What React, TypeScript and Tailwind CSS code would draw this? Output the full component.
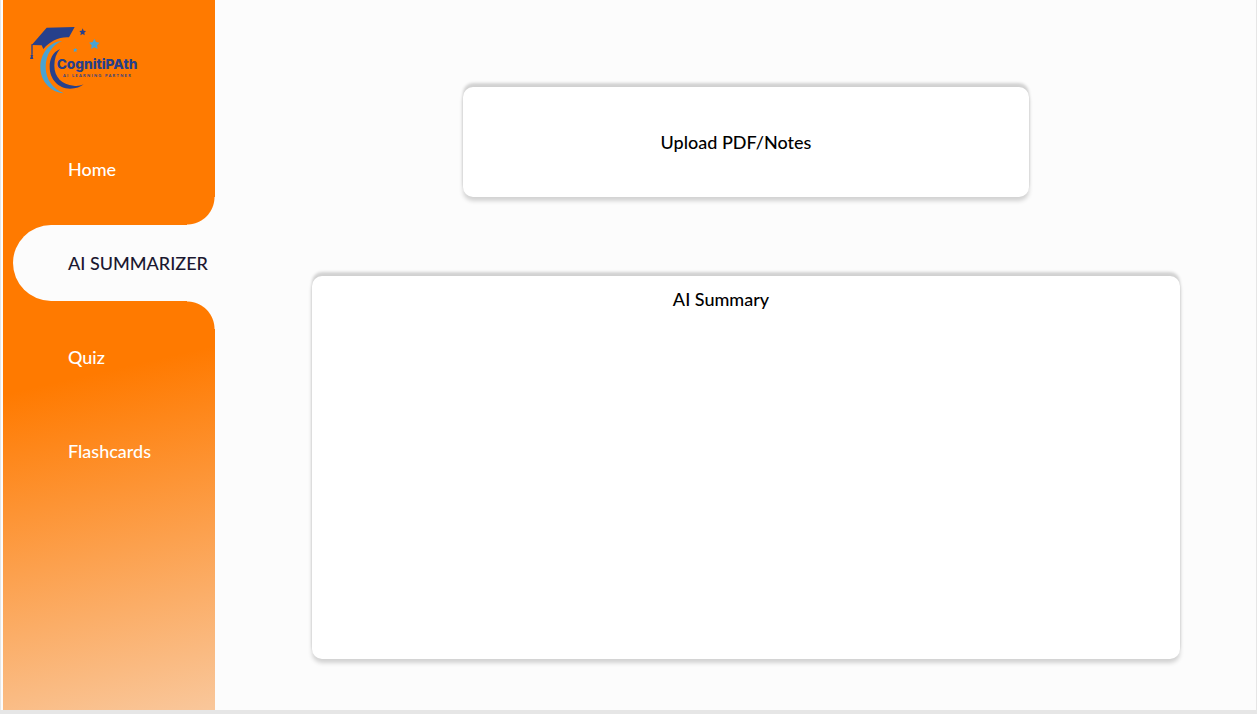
const NAV = [
  { label: "Home", href: "#home" },
  { label: "AI SUMMARIZER", href: "#summarizer" },
  { label: "Quiz", href: "#quiz" },
  { label: "Flashcards", href: "#flashcards" },
];

const ACTIVE = "AI SUMMARIZER";

function Logo() {
  return (
    <svg viewBox="0 0 390 270" className="h-[90px] w-[130px]" role="img" aria-label="CognitiPAth AI Learning Partner">
      <path d="M126 78C88 80 61 116 61 157C61 195 88 231 131 235C98 222 77 192 77 157C77 120 96 89 126 78Z" fill="#4aa3d2" />
      <path d="M120 102C98 112 89 132 89 156C89 192 115 221 150 221C168 221 182 216 191 208C181 212 171 214 161 212C126 209 103 186 103 152C103 131 109 115 120 102Z" fill="#27408b" />
      <path d="M80 38L164 36L147 67C118 65 91 78 70 102L65 91L35 90Z" fill="#27408b" />
      <path d="M34 88h4v30h-4zM36 117l4 5-2 2 2 8h-10l3-8-2-2z" fill="#27408b" />
      <path d="M188 40l3 7 7 1-5 5 1 8-6-4-7 4 2-8-5-5 7-1z" fill="#27408b" />
      <path d="M223 71l5 10 11 2-8 8 2 11-10-5-10 5 2-11-8-8 11-2z" fill="#4aa3d2" />
      <path d="M166 98l2 4 5 1-4 3 1 5-4-2-5 2 1-5-3-3 5-1z" fill="#4aa3d2" />
      <text x="110" y="161" fontSize="41" fontWeight="800" fill="#27408b" className="font-[Inter,sans-serif]">
        CognitiPAth
      </text>
      <text x="129" y="187" fontSize="12" fontWeight="700" letterSpacing="4" fill="#27408b" className="font-[Lato,sans-serif]">
        AI LEARNING PARTNER
      </text>
    </svg>
  );
}

function NavItem({ label, href }: { label: string; href: string }) {
  const active = label === ACTIVE;
  return (
    <li>
      <a
        href={href}
        aria-current={active ? "page" : undefined}
        className={
          active
            ? "relative flex h-[76px] items-center rounded-l-full bg-[#fcfcfc] pl-[55px] whitespace-nowrap text-[#1b1830] before:absolute before:right-0 before:bottom-full before:size-7 before:bg-[radial-gradient(circle_at_0_0,transparent_27px,#fcfcfc_28px)] after:absolute after:top-full after:right-0 after:size-7 after:bg-[radial-gradient(circle_at_0_100%,transparent_27px,#fcfcfc_28px)]"
            : "flex h-[76px] items-center pl-[55px] text-white"
        }
      >
        {label}
      </a>
    </li>
  );
}

export default function App() {
  return (
    <div className="flex min-h-screen border-r border-b-4 border-l border-[#e6e6e6] bg-[#fcfcfc] pl-0.5 font-[Lato,sans-serif] text-lg font-medium text-black">
      <aside className="w-[212px] shrink-0 bg-[linear-gradient(167deg,#ff7a00_52%,#f9c79b_100%)] pt-[15px]">
        <div className="pl-[17px]">
          <Logo />
        </div>
        <nav className="mt-[26px] pl-2.5">
          <ul className="flex flex-col gap-[18px]">
            {NAV.map((item) => (
              <NavItem key={item.label} {...item} />
            ))}
          </ul>
        </nav>
      </aside>
      <main className="flex min-w-0 grow flex-col items-center gap-[79px] pt-[87px] pb-[51px] pl-[21px]">
        <button
          type="button"
          className="flex h-[110px] w-full max-w-[566px] items-center justify-center rounded-[10px] bg-white pr-5 shadow-[0_-4px_3px_rgba(0,0,0,0.17),0_4px_4px_rgba(0,0,0,0.17)]"
        >
          Upload PDF/Notes
        </button>
        <section className="w-full max-w-[868px] grow rounded-[10px] bg-white pt-[9px] pr-[50px] text-center shadow-[0_-4px_3px_rgba(0,0,0,0.17),0_4px_4px_rgba(0,0,0,0.17)]">
          <h2>AI Summary</h2>
        </section>
      </main>
    </div>
  );
}
